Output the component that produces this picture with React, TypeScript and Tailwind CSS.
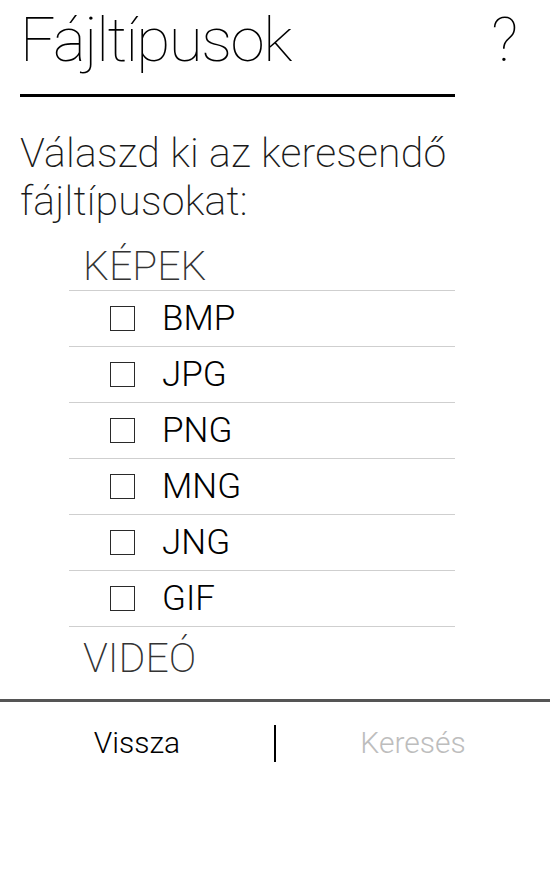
import React from "react";

const formats = ["BMP", "JPG", "PNG", "MNG", "JNG", "GIF"];

function Box() {
  return <span className="inline-block w-[25px] h-[25px] border-[1.5px] border-[#2a2a2a] shrink-0" />;
}

export default function App() {
  return (
    <div className="w-[550px] h-[870px] bg-white text-black flex flex-col" style={{ fontFamily: "Roboto, sans-serif" }}>
      <div className="pl-[20px] pt-[2px]">
        <div className="flex items-start justify-between pr-[32px]">
          <h1 className="text-[62px] leading-[76px] font-thin tracking-[-1.5px]">Fájltípusok</h1>
          <span className="text-[62px] leading-[76px] font-thin">?</span>
        </div>
        <div className="w-[435px] h-[3px] bg-black mt-[16px]" />
        <p className="mt-[32px] text-[41px] leading-[48px] font-extralight text-[#1a1a1a] tracking-[0.2px]">
          Válaszd ki az keresendő
          <br />
          fájltípusokat:
        </p>
      </div>
      <div className="ml-[69px] w-[386px] mt-[17px]">
        <div className="pl-[14px] h-[49px] text-[41px] leading-[48px] font-extralight text-[#333] border-b border-[#cfcfcf]">
          KÉPEK
        </div>
        {formats.map((f) => (
          <div key={f} className="h-[56px] flex items-center pl-[41px] gap-[27px] border-b border-[#cfcfcf]">
            <Box />
            <span className="text-[35px] font-light pt-[2px]">{f}</span>
          </div>
        ))}
        <div className="pl-[14px] mt-[7px] text-[41px] leading-[48px] font-extralight text-[#333]">VIDEÓ</div>
      </div>
      <div className="mt-[17px] h-[3px] bg-[#555]" />
      <div className="flex items-start pt-[23px]">
        <div className="flex-1 flex justify-center text-[30px] leading-[36px] font-light">Vissza</div>
        <div className="w-[2px] h-[37px] bg-black" />
        <div className="flex-1 flex justify-center text-[30px] leading-[36px] font-light text-[#bdbdbd]">Keresés</div>
      </div>
    </div>
  );
}
